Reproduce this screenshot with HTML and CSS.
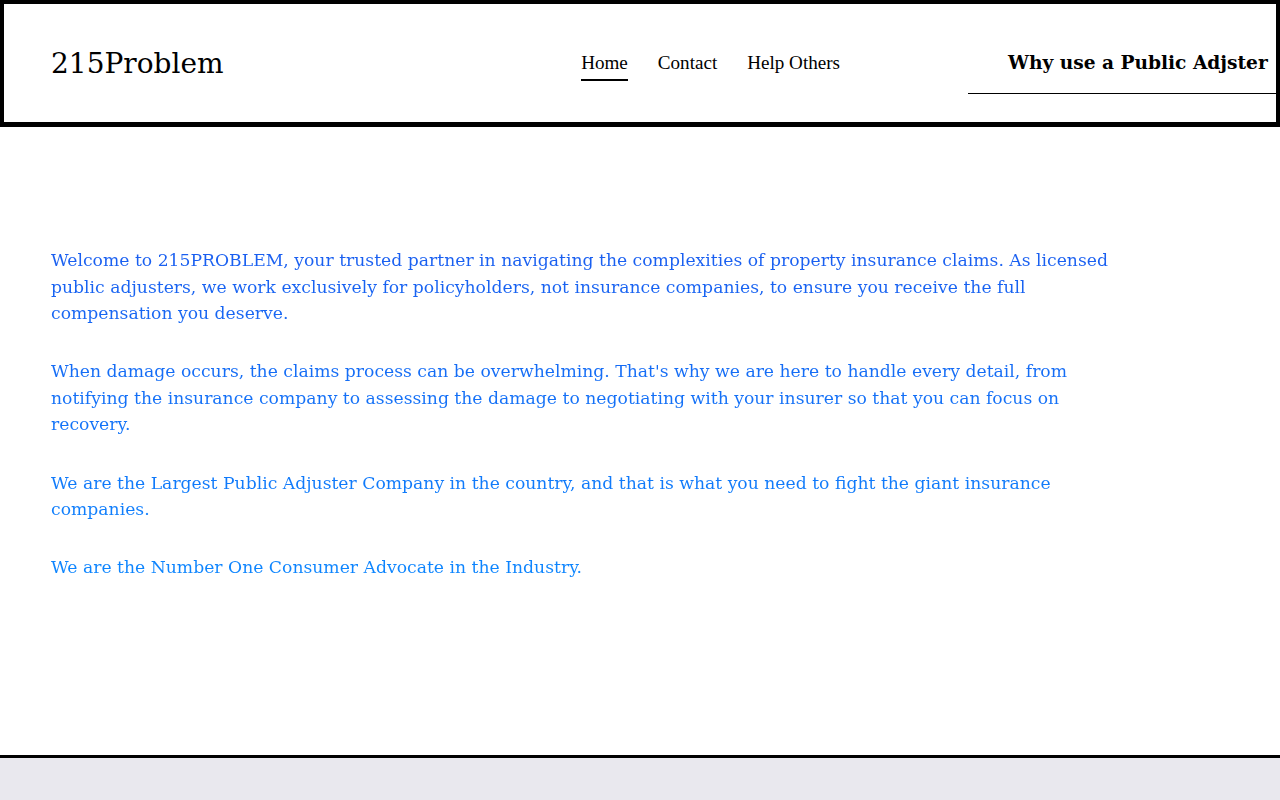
FILE: index.html
```html
<!DOCTYPE html>
<html lang="en">
<head>
<meta charset="utf-8">
<title>215Problem</title>
<link rel="stylesheet" href="styles.css">
</head>
<body>
<header class="site-header">
  <div class="logo">215Problem</div>
  <nav class="main-nav">
    <a class="nav-link active" href="#">Home</a>
    <a class="nav-link" href="#">Contact</a>
    <a class="nav-link" href="#">Help Others</a>
  </nav>
  <div class="why-box">Why use a Public Adjster</div>
</header>
<main class="content">
  <div class="intro">
    <p>Welcome to 215PROBLEM, your trusted partner in navigating the complexities of property insurance claims. As licensed public adjusters, we work exclusively for policyholders, not insurance companies, to ensure you receive the full compensation you deserve.</p>
    <p>When damage occurs, the claims process can be overwhelming. That's why we are here to handle every detail, from notifying the insurance company to assessing the damage to negotiating with your insurer so that you can focus on recovery.</p>
    <p>We are the Largest Public Adjuster Company in the country, and that is what you need to fight the giant insurance companies.</p>
    <p>We are the Number One Consumer Advocate in the Industry.</p>
  </div>
</main>
<footer class="site-footer"></footer>
</body>
</html>
```
FILE: styles.css
```css
html, body {
  margin: 0;
  padding: 0;
  background: #ffffff;
}
body {
  font-family: "DejaVu Serif", Georgia, serif;
  color: #000;
  overflow: hidden;
}
.site-header {
  box-sizing: border-box;
  height: 127px;
  border-style: solid;
  border-color: #000;
  border-width: 4px 4px 5px 4px;
  display: flex;
  align-items: center;
  padding-left: 47px;
  overflow: hidden;
}
.logo {
  font-family: "DejaVu Serif", Georgia, serif;
  font-size: 28px;
  line-height: 36px;
  margin-top: 2px;
}
.main-nav {
  margin-left: auto;
  display: flex;
  gap: 30px;
}
.nav-link {
  font-family: "Liberation Serif", "Times New Roman", serif;
  font-size: 19.1px;
  line-height: 22px;
  color: #000;
  text-decoration: none;
  padding: 7px 0 5px 0;
  border-bottom: 2px solid transparent;
}
.nav-link.active {
  border-bottom-color: #000;
}
.why-box {
  box-sizing: border-box;
  margin-left: 128px;
  width: 308px;
  flex: 0 0 308px;
  padding: 20px 0 19px 40px;
  line-height: 22px;
  font-size: 18.6px;
  font-weight: bold;
  white-space: nowrap;
  border-bottom: 1px solid #000;
}
.content {
  box-sizing: border-box;
  height: 628px;
  padding: 120px 0 0 51px;
}
.intro {
  max-width: 1080px;
  font-size: 17.22px;
  line-height: 26.5px;
  background: linear-gradient(180deg, #1a5ef0 0%, #0c86ff 100%);
  -webkit-background-clip: text;
  background-clip: text;
  color: transparent;
}
.intro p {
  margin: 0 0 31.8px 0;
}
.intro p:last-child {
  margin-bottom: 0;
}
.site-footer {
  height: 60px;
  border-top: 3px solid #000;
  background: #e9e8ee;
}
```
